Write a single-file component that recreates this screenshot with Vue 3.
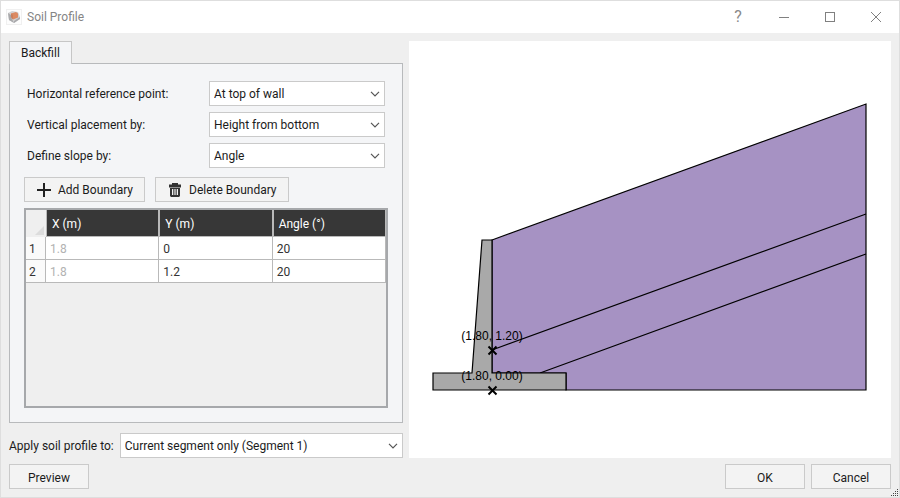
<script setup>
import { ref } from 'vue'

const reference = ref('At top of wall')
const placement = ref('Height from bottom')
const slope = ref('Angle')
const target = ref('Current segment only (Segment 1)')

const boundaries = ref([
  { x: '1.8', y: '0', angle: '20' },
  { x: '1.8', y: '1.2', angle: '20' },
])

const markers = [
  { x: 492, y: 350, label: '(1.80, 1.20)' },
  { x: 492, y: 390, label: '(1.80, 0.00)' },
]
</script>

<template>
  <div class="window">
    <header class="titlebar">
      <svg class="app-icon" viewBox="0 0 16 16" aria-hidden="true">
        <rect x="0.5" y="0.5" width="15" height="15" fill="#fdfdfd" stroke="#f0f0f0" />
        <path d="M2 4L6 2L12 3L14 8L14 10L8 14L3 11Z" fill="#d2d2d3" />
        <path d="M2 4L5 6L6 10L8 14L3 11Z" fill="#a9a9ab" />
        <path d="M5 4.5L10 3L12 4.5V8.5L7 10.5L5 8Z" fill="#dc8a62" />
        <path d="M5 4.5L7 6V10.5L5 8Z" fill="#c9805e" />
        <path d="M8 12L14 8V10L8 14Z" fill="#a9a9ac" />
      </svg>
      <h1 class="title">Soil Profile</h1>
      <div class="caption-buttons">
        <button type="button" class="caption help" aria-label="Help">?</button>
        <button type="button" class="caption" aria-label="Minimize">
          <svg viewBox="0 0 12 12"><path d="M1 6.5H11" /></svg>
        </button>
        <button type="button" class="caption" aria-label="Maximize">
          <svg viewBox="0 0 12 12"><rect x="1.5" y="1.5" width="9" height="9" /></svg>
        </button>
        <button type="button" class="caption" aria-label="Close">
          <svg viewBox="0 0 12 12"><path d="M1 1L11 11M11 1L1 11" /></svg>
        </button>
      </div>
    </header>

    <main class="content">
      <section class="settings">
        <div class="tabs" role="tablist">
          <button type="button" class="tab" role="tab" aria-selected="true">Backfill</button>
        </div>
        <div class="panel" role="tabpanel">
          <div class="fields">
            <label for="reference">Horizontal reference point:</label>
            <div class="select">
              <select id="reference" v-model="reference"><option>At top of wall</option></select>
              <svg viewBox="0 0 10 6"><path d="M1 0.8L5 4.8L9 0.8" /></svg>
            </div>
            <label for="placement">Vertical placement by:</label>
            <div class="select">
              <select id="placement" v-model="placement"><option>Height from bottom</option></select>
              <svg viewBox="0 0 10 6"><path d="M1 0.8L5 4.8L9 0.8" /></svg>
            </div>
            <label for="slope">Define slope by:</label>
            <div class="select">
              <select id="slope" v-model="slope"><option>Angle</option></select>
              <svg viewBox="0 0 10 6"><path d="M1 0.8L5 4.8L9 0.8" /></svg>
            </div>
          </div>

          <div class="tools">
            <button type="button" class="button add">
              <svg viewBox="0 0 16 16"><path d="M8 1V15M1 8H15" stroke="#222" stroke-width="2" /></svg>
              Add Boundary
            </button>
            <button type="button" class="button delete">
              <svg viewBox="0 0 16 16">
                <path
                  fill="#333"
                  fill-rule="evenodd"
                  d="M5 1H11V2.5H14V5.5H2V2.5H5ZM3 6H13V14L12 15H4L3 14ZM5 7V13H6.3V7ZM7.4 7V13H8.6V7ZM9.7 7V13H11V7Z"
                />
              </svg>
              Delete Boundary
            </button>
          </div>

          <div class="grid">
            <table>
              <thead>
                <tr>
                  <td class="corner">
                    <svg viewBox="0 0 9 9"><path d="M9 0V9H0Z" fill="#dcdcdc" /></svg>
                  </td>
                  <th scope="col">X (m)</th>
                  <th scope="col">Y (m)</th>
                  <th scope="col">Angle (°)</th>
                </tr>
              </thead>
              <tbody>
                <tr v-for="(row, i) in boundaries" :key="i">
                  <th scope="row">{{ i + 1 }}</th>
                  <td class="locked">{{ row.x }}</td>
                  <td>{{ row.y }}</td>
                  <td>{{ row.angle }}</td>
                </tr>
              </tbody>
            </table>
          </div>
        </div>

        <div class="apply">
          <label for="target">Apply soil profile to:</label>
          <div class="select">
            <select id="target" v-model="target"><option>Current segment only (Segment 1)</option></select>
            <svg viewBox="0 0 10 6"><path d="M1 0.8L5 4.8L9 0.8" /></svg>
          </div>
        </div>
      </section>

      <section class="preview">
        <svg viewBox="409 41 482 417" role="img" aria-label="Retaining wall section">
          <path class="soil" d="M492 240L866 104V390H566V373H492Z" />
          <path class="line" d="M492 350L866 214M540 373L866 254" />
          <path class="wall" d="M482 240H492V373H566V390H433V373H472Z" />
          <g v-for="m in markers" :key="m.label">
            <text :x="m.x" :y="m.y - 10">{{ m.label }}</text>
            <path class="cross" :d="`M${m.x - 3.5} ${m.y - 3.5}l8 8m0 -8l-8 8`" />
          </g>
        </svg>
      </section>
    </main>

    <footer class="footer">
      <button type="button" class="button action first">Preview</button>
      <button type="button" class="button action">OK</button>
      <button type="button" class="button action">Cancel</button>
      <svg class="grip" viewBox="0 0 8 8" aria-hidden="true">
        <path
          fill="#444"
          d="M6 0h1v1h-1zM4 2h1v1h-1zM6 2h1v1h-1zM2 4h1v1h-1zM4 4h1v1h-1zM6 4h1v1h-1zM0 6h1v1h-1zM2 6h1v1h-1zM4 6h1v1h-1zM6 6h1v1h-1z"
        />
      </svg>
    </footer>
  </div>
</template>

<style>
body {
  background: #efefef;
}
</style>

<style scoped>
.window,
.window * {
  box-sizing: border-box;
}
.window {
  display: flex;
  flex-direction: column;
  min-height: 100vh;
  border: 1px solid #dedede;
  background: #efefef;
  color: #1b1b1b;
  font: 12px/16px Roboto, 'Open Sans', sans-serif;
}
button,
select {
  font: inherit;
  color: inherit;
  margin: 0;
  border-radius: 0;
}
svg {
  display: block;
  flex: none;
}
.titlebar {
  display: flex;
  align-items: center;
  height: 32px;
  padding-left: 5px;
  background: #fff;
}
.app-icon {
  width: 16px;
  height: 16px;
}
.title {
  flex: 1;
  margin: 0 0 0 5px;
  font-size: 12px;
  font-weight: 400;
  color: #858585;
}
.caption-buttons {
  display: flex;
  height: 32px;
}
.caption {
  display: flex;
  align-items: center;
  justify-content: center;
  width: 46px;
  padding: 0;
  border: 0;
  background: none;
  color: #8a8a8a;
}
.caption svg {
  width: 12px;
  height: 12px;
  fill: none;
  stroke: #808080;
}
.help {
  font-size: 16px;
}
.content {
  display: flex;
  flex: 1;
  gap: 6px;
  padding: 8px 8px 0;
}
.settings {
  display: flex;
  flex-direction: column;
  flex: 0 0 394px;
}
.tabs {
  display: flex;
  height: 22px;
}
.tab {
  z-index: 1;
  height: 23px;
  padding: 0 11px;
  border: 1px solid #c6c6c6;
  border-bottom: 0;
  background: #f4f5f7;
}
.panel {
  display: flex;
  flex-direction: column;
  flex: 1;
  padding: 17px 14px 14px;
  border: 1px solid #b8babc;
  background: #f4f5f7;
}
.fields {
  display: grid;
  grid-template-columns: 1fr 176px;
  gap: 6px;
  align-items: center;
  padding: 0 3px;
}
.select {
  display: grid;
  align-items: center;
}
.select select,
.select svg {
  grid-area: 1 / 1;
}
.select select {
  appearance: none;
  width: 100%;
  height: 25px;
  padding: 0 24px 0 4px;
  border: 1px solid #cacaca;
  background: #fff;
}
.select svg {
  justify-self: end;
  width: 10px;
  height: 6px;
  margin-right: 5px;
  fill: none;
  stroke: #555;
  stroke-width: 1.2;
  pointer-events: none;
}
.button {
  display: flex;
  align-items: center;
  justify-content: center;
  height: 25px;
  padding: 0 11px;
  border: 1px solid #cacaca;
  background: #f3f3f3;
  white-space: nowrap;
}
.tools {
  display: flex;
  gap: 10px;
  margin: 9px 0 6px;
}
.tools svg {
  width: 16px;
  height: 16px;
  margin-right: 6px;
}
.grid {
  flex: 1;
  border: 2px solid #a6a8ab;
  background: #efefef;
}
table {
  width: 100%;
  table-layout: fixed;
  border-collapse: separate;
  border-spacing: 0;
}
th,
td {
  height: 23px;
  padding: 1px 4px 0;
  border: solid #b9b9b9;
  border-width: 0 1px 1px 0;
  background: #fff;
  color: #333;
  font-weight: 400;
  text-align: left;
}
thead th {
  height: 27px;
  padding-left: 5px;
  border-left-width: 1px;
  background: #373737;
  color: #fff;
}
thead .corner {
  width: 20px;
  padding: 0 2px 2px 0;
  border: 0;
  background: #efefef;
  vertical-align: bottom;
}
.corner svg {
  width: 9px;
  height: 9px;
  margin-left: auto;
}
tbody th {
  padding-left: 3px;
  background: #fafafa;
}
td.locked {
  color: #b2b2b2;
}
.apply {
  display: flex;
  align-items: center;
  gap: 6px;
  margin-top: 10px;
}
.apply label {
  white-space: nowrap;
}
.apply .select {
  flex: 1;
}
.preview {
  display: flex;
  flex: 1;
  min-width: 0;
  background: #fff;
}
.preview svg {
  flex: 1;
  min-width: 0;
  width: 100%;
  height: 100%;
}
.soil {
  fill: #a692c3;
  stroke: #000;
}
.line {
  fill: none;
  stroke: #000;
}
.wall {
  fill: #a9a9a9;
  stroke: #000;
}
.soil,
.line,
.wall {
  stroke-width: 1.2;
}
.cross {
  fill: none;
  stroke: #000;
  stroke-width: 2;
}
.preview text {
  font: 12px 'Liberation Sans', sans-serif;
  text-anchor: middle;
}
.footer {
  position: relative;
  display: flex;
  gap: 6px;
  padding: 6px 8px 8px;
}
.action {
  width: 80px;
  padding-top: 2px;
}
.first {
  margin-right: auto;
}
.grip {
  position: absolute;
  right: 0;
  bottom: 0;
  width: 8px;
  height: 8px;
}
</style>
